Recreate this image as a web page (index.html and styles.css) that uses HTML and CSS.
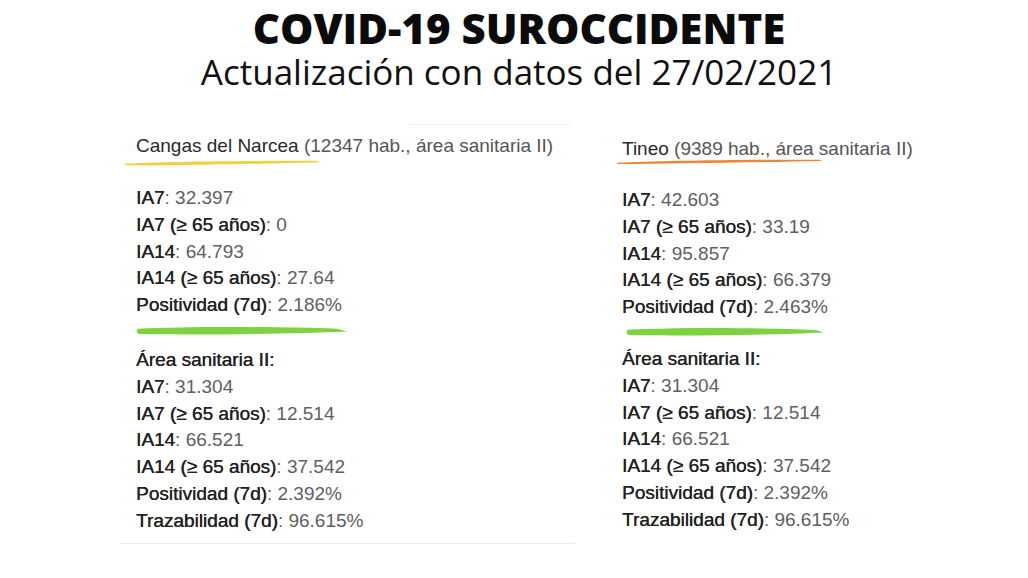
FILE: index.html
```html
<!DOCTYPE html>
<html lang="es">
<head>
<meta charset="utf-8">
<link rel="stylesheet" href="styles.css">
</head>
<body>
<header class="top">
  <h1 class="title">COVID-19 SUROCCIDENTE</h1>
  <p class="subtitle">Actualización con datos del 27/02/2021</p>
</header>
<main class="cols">
  <section class="card card-left">
    <div class="head"><span class="name">Cangas del Narcea</span> <span class="paren">(12347 hab., área sanitaria II)</span></div>
    <svg class="stroke stroke-yellow" viewBox="0 0 200 8" preserveAspectRatio="none"><path d="M0 5 C40 2 120 1 196 1 L200 3 C140 5 60 8 2 7 Z" fill="#f3cf3f"/></svg>
    <ul class="rows">
      <li><b>IA7</b>: 32.397</li>
      <li><b>IA7 (≥ 65 años)</b>: 0</li>
      <li><b>IA14</b>: 64.793</li>
      <li><b>IA14 (≥ 65 años)</b>: 27.64</li>
      <li><b>Positividad (7d)</b>: 2.186%</li>
    </ul>
    <svg class="stroke stroke-green" viewBox="0 0 210 10" preserveAspectRatio="none"><path d="M2 3 C60 0 140 1 200 3 L210 6 C150 9 60 10 3 9 C0 7 0 5 2 3 Z" fill="#7cd23f"/></svg>
    <ul class="rows">
      <li><b>Área sanitaria II:</b></li>
      <li><b>IA7</b>: 31.304</li>
      <li><b>IA7 (≥ 65 años)</b>: 12.514</li>
      <li><b>IA14</b>: 66.521</li>
      <li><b>IA14 (≥ 65 años)</b>: 37.542</li>
      <li><b>Positividad (7d)</b>: 2.392%</li>
      <li><b>Trazabilidad (7d)</b>: 96.615%</li>
    </ul>
  </section>
  <section class="card card-right">
    <div class="head"><span class="name">Tineo</span> <span class="paren">(9389 hab., área sanitaria II)</span></div>
    <svg class="stroke stroke-orange" viewBox="0 0 200 8" preserveAspectRatio="none"><path d="M0 6 C40 3 120 1 198 1 L200 3 C140 5 60 8 2 8 Z" fill="#f08535"/></svg>
    <ul class="rows">
      <li><b>IA7</b>: 42.603</li>
      <li><b>IA7 (≥ 65 años)</b>: 33.19</li>
      <li><b>IA14</b>: 95.857</li>
      <li><b>IA14 (≥ 65 años)</b>: 66.379</li>
      <li><b>Positividad (7d)</b>: 2.463%</li>
    </ul>
    <svg class="stroke stroke-green" viewBox="0 0 210 10" preserveAspectRatio="none"><path d="M2 3 C60 0 140 1 200 3 L210 6 C150 9 60 10 3 9 C0 7 0 5 2 3 Z" fill="#7cd23f"/></svg>
    <ul class="rows">
      <li><b>Área sanitaria II:</b></li>
      <li><b>IA7</b>: 31.304</li>
      <li><b>IA7 (≥ 65 años)</b>: 12.514</li>
      <li><b>IA14</b>: 66.521</li>
      <li><b>IA14 (≥ 65 años)</b>: 37.542</li>
      <li><b>Positividad (7d)</b>: 2.392%</li>
      <li><b>Trazabilidad (7d)</b>: 96.615%</li>
    </ul>
  </section>
</main>
</body>
</html>
```

FILE: styles.css
```css
* { box-sizing: border-box; }
html, body { margin: 0; padding: 0; background: #ffffff; }
body {
  width: 1028px;
  height: 578px;
  overflow: hidden;
  font-family: "Liberation Sans", Arial, sans-serif;
}
.top {
  display: flex;
  flex-direction: column;
  align-items: center;
  padding: 4px 0 0 10px;
}
.title {
  margin: 0;
  font-family: "Open Sans", sans-serif;
  font-weight: 800;
  font-size: 42px;
  line-height: 48px;
  color: #0b0b0b;
}
.subtitle {
  margin: 0;
  font-family: "Open Sans", sans-serif;
  font-weight: 400;
  font-size: 35px;
  line-height: 40px;
  color: #111;
}
.cols {
  display: flex;
  gap: 30px;
  padding: 32px 0 0 120px;
}
.card {
  display: flex;
  flex-direction: column;
}
.card-left {
  width: 455px;
  padding: 0 0 8px 16px;
  border-bottom: 1px solid #ececec;
  position: relative;
}
.card-left::before {
  content: "";
  position: absolute;
  top: 0;
  right: 5px;
  width: 160px;
  border-top: 1px solid #f0f0f0;
}
.card-right {
  width: 320px;
  padding: 3px 0 0 17px;
}
.head {
  font-size: 19px;
  line-height: 24px;
  margin-top: 10px;
  color: #2a2a2a;
  white-space: nowrap;
}
.paren { color: #555; }
.stroke { display: block; }
.stroke-yellow {
  width: 196px;
  height: 6px;
  margin: 2px 0 0 -12px;
}
.stroke-orange {
  width: 206px;
  height: 5px;
  margin: -2px 0 0 -6px;
}
.stroke-yellow + .rows { margin-top: 19px; }
.stroke-orange + .rows { margin-top: 23px; }
.stroke-green {
  width: 211px;
  height: 9px;
  margin: 7px 0 12px 0;
}
.card-right .stroke-green {
  width: 198px;
  margin: 6px 0 10px 4px;
}
.rows {
  list-style: none;
  margin: 0;
  padding: 0;
}
.rows li {
  font-size: 19px;
  line-height: 26.8px;
  color: #606060;
  white-space: nowrap;
}
.rows b {
  font-weight: 400;
  color: #222;
  text-shadow: 0.35px 0 0 #222;
}
```
